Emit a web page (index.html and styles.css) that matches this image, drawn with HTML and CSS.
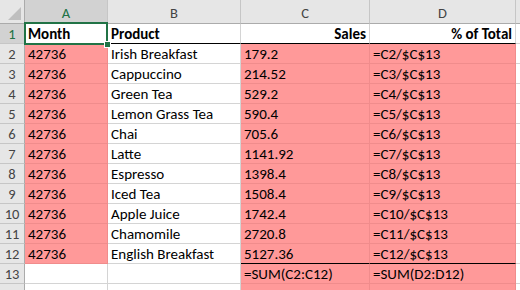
FILE: index.html
```html
<!DOCTYPE html>
<html>
<head>
<meta charset="utf-8">
<link rel="stylesheet" href="styles.css">
</head>
<body>
<div class="sheet">
  <div class="grid">
    <div class="ch corner"><span class="tri"></span></div>
    <div class="ch sel">A</div>
    <div class="ch">B</div>
    <div class="ch">C</div>
    <div class="ch">D</div>
    <div class="ch last"></div>

    <div class="rh sel">1</div>
    <div class="c b hdr">Month</div>
    <div class="c b hdr">Product</div>
    <div class="c b hdr r">Sales</div>
    <div class="c b hdr r">% of Total</div>
    <div class="c e"></div>

    <div class="rh">2</div><div class="c p">42736</div><div class="c">Irish Breakfast</div><div class="c p">179.2</div><div class="c p">=C2/$C$13</div><div class="c e"></div>
    <div class="rh">3</div><div class="c p">42736</div><div class="c">Cappuccino</div><div class="c p">214.52</div><div class="c p">=C3/$C$13</div><div class="c e"></div>
    <div class="rh">4</div><div class="c p">42736</div><div class="c">Green Tea</div><div class="c p">529.2</div><div class="c p">=C4/$C$13</div><div class="c e"></div>
    <div class="rh">5</div><div class="c p">42736</div><div class="c">Lemon Grass Tea</div><div class="c p">590.4</div><div class="c p">=C5/$C$13</div><div class="c e"></div>
    <div class="rh">6</div><div class="c p">42736</div><div class="c">Chai</div><div class="c p">705.6</div><div class="c p">=C6/$C$13</div><div class="c e"></div>
    <div class="rh">7</div><div class="c p">42736</div><div class="c">Latte</div><div class="c p">1141.92</div><div class="c p">=C7/$C$13</div><div class="c e"></div>
    <div class="rh">8</div><div class="c p">42736</div><div class="c">Espresso</div><div class="c p">1398.4</div><div class="c p">=C8/$C$13</div><div class="c e"></div>
    <div class="rh">9</div><div class="c p">42736</div><div class="c">Iced Tea</div><div class="c p">1508.4</div><div class="c p">=C9/$C$13</div><div class="c e"></div>
    <div class="rh">10</div><div class="c p">42736</div><div class="c">Apple Juice</div><div class="c p">1742.4</div><div class="c p">=C10/$C$13</div><div class="c e"></div>
    <div class="rh">11</div><div class="c p">42736</div><div class="c">Chamomile</div><div class="c p">2720.8</div><div class="c p">=C11/$C$13</div><div class="c e"></div>
    <div class="rh">12</div><div class="c p">42736</div><div class="c">English Breakfast</div><div class="c p tot">5127.36</div><div class="c p tot">=C12/$C$13</div><div class="c e"></div>
    <div class="rh">13</div><div class="c"></div><div class="c"></div><div class="c p">=SUM(C2:C12)</div><div class="c p">=SUM(D2:D12)</div><div class="c e"></div>
    <div class="rh"></div><div class="c"></div><div class="c"></div><div class="c p"></div><div class="c p"></div><div class="c e"></div>
  </div>
  <div class="selection"><span class="handle"></span></div>
</div>
</body>
</html>
```
FILE: styles.css
```css
html, body {
  margin: 0;
  padding: 0;
  background: #ffffff;
  overflow: hidden;
}
.sheet {
  position: relative;
  width: 520px;
  height: 290px;
  overflow: hidden;
  font-family: Calibri, Carlito, Lato, "Liberation Sans", sans-serif;
  font-size: 15px;
  color: #000;
}
.grid {
  display: grid;
  grid-template-columns: 25px 83px 133px 129px 146px 1fr;
  grid-template-rows: 24px repeat(14, 20px);
}
.ch {
  box-sizing: border-box;
  background: #e6e6e6;
  border-right: 1px solid #c6c6c6;
  border-bottom: 1px solid #ababab;
  color: #444;
  font-size: 14.5px;
  display: flex;
  align-items: center;
  justify-content: center;
  padding-top: 2px;
}
.ch.sel {
  background: #d2d2d2;
  color: #217346;
}
.ch.last { border-right: none; }
.corner {
  position: relative;
  border-right-color: #ababab;
}
.tri {
  position: absolute;
  right: 3px;
  bottom: 3px;
  width: 0;
  height: 0;
  border-left: 13px solid transparent;
  border-bottom: 13px solid #bfbfbf;
}
.rh {
  box-sizing: border-box;
  background: #e6e6e6;
  border-right: 1px solid #ababab;
  border-bottom: 1px solid #c6c6c6;
  color: #444;
  font-size: 14.5px;
  display: flex;
  align-items: center;
  justify-content: center;
  padding-top: 1px;
}
.rh.sel {
  background: #d2d2d2;
  color: #217346;
}
.c {
  box-sizing: border-box;
  border-right: 1px solid #d4d4d4;
  border-bottom: 1px solid #d4d4d4;
  display: flex;
  align-items: flex-end;
  padding: 0 3px 0 3px;
  line-height: 17px;
  white-space: nowrap;
  overflow: hidden;
}
.c.r { justify-content: flex-end; }
.c.b { font-weight: bold; }
.c.hdr { border-bottom: 1px solid #000; }
.c.p {
  background: #ff9999;
  border-right-color: #f08c8c;
  border-bottom-color: #f08c8c;
}
.c.p.hdr { border-bottom-color: #000; }
.c.tot { border-bottom-color: #000; }
.c.e { border-right: none; }
.selection {
  position: absolute;
  left: 24px;
  top: 22px;
  width: 84px;
  height: 23px;
  box-sizing: border-box;
  border: 2px solid #217346;
}
.handle {
  position: absolute;
  right: -5px;
  bottom: -5px;
  width: 5px;
  height: 5px;
  background: #217346;
  border: 1px solid #ffffff;
}
```
